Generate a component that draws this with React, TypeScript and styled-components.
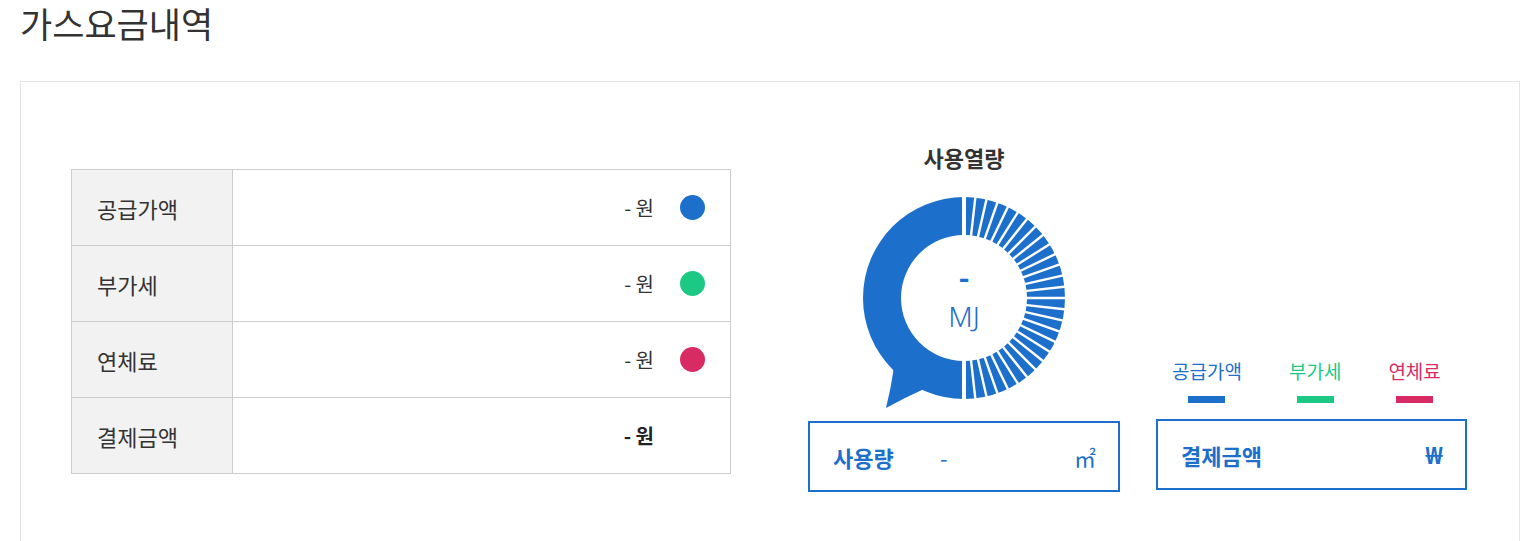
import React from 'react';
import styled, { createGlobalStyle } from 'styled-components';

const BLUE = '#1d6fcc';
const GREEN = '#1bc985';
const PINK = '#d92b63';

const GlobalStyle = createGlobalStyle`
  html, body {
    margin: 0;
    padding: 0;
    background: #fff;
  }
  body {
    font-family: "Noto Sans CJK KR", "Noto Sans", sans-serif;
    color: #333;
    overflow: hidden;
  }
`;

const Page = styled.div`
  padding: 0 9px 0 20px;
`;

const PageTitle = styled.h1`
  margin: 3px 0 38px;
  font-size: 35px;
  line-height: 40px;
  font-weight: 400;
  color: #333;
`;

const Panel = styled.section`
  border: 1px solid #e5e5e5;
  min-height: 520px;
  padding: 0 50px;
  display: flex;
  align-items: flex-start;
`;

const ChargeTable = styled.table`
  margin-top: 87px;
  width: 660px;
  border-collapse: collapse;
  flex-shrink: 0;
`;

const Row = styled.tr`
  height: 76px;
`;

const LabelCell = styled.th`
  width: 161px;
  background: #f2f2f2;
  border: 1px solid #ccc;
  padding: 0 0 0 25px;
  text-align: left;
  font-size: 22px;
  font-weight: 400;
  color: #333;
  box-sizing: border-box;
`;

const ValueCell = styled.td`
  border: 1px solid #ccc;
  padding: 0 25px 0 0;
`;

const ValueInner = styled.div`
  display: flex;
  justify-content: flex-end;
  align-items: center;
  gap: 26px;
`;

const Amount = styled.span<{ $strong?: boolean }>`
  font-size: 20px;
  font-weight: ${(p) => (p.$strong ? 700 : 400)};
  color: ${(p) => (p.$strong ? '#222' : '#333')};
`;

const Dot = styled.span<{ $color?: string }>`
  width: 25px;
  height: 25px;
  border-radius: 50%;
  background: ${(p) => p.$color || 'transparent'};
`;

const GaugeColumn = styled.div`
  margin: 61px 0 0 77px;
  width: 312px;
  display: flex;
  flex-direction: column;
  align-items: center;
  flex-shrink: 0;
`;

const GaugeTitle = styled.h3`
  margin: 0;
  font-size: 22px;
  line-height: 29px;
  font-weight: 700;
  color: #333;
`;

const GaugeWrap = styled.div`
  position: relative;
  margin-top: 21px;
  width: 312px;
  height: 220px;
`;

const GaugeCenter = styled.div`
  position: absolute;
  left: 106px;
  top: 55px;
  width: 100px;
  height: 100px;
  display: flex;
  flex-direction: column;
  align-items: center;
  justify-content: center;
  color: ${BLUE};
`;

const CenterDash = styled.span`
  font-size: 30px;
  line-height: 22px;
  font-weight: 700;
  margin-bottom: 14px;
`;

const CenterUnit = styled.span`
  font-family: "Noto Sans", sans-serif;
  font-size: 28px;
  line-height: 30px;
  font-weight: 300;
`;

const SummaryBox = styled.div<{ $width: number; $gap?: number }>`
  box-sizing: border-box;
  width: ${(p) => p.$width}px;
  height: 71px;
  margin-top: ${(p) => p.$gap || 0}px;
  border: 2px solid ${BLUE};
  display: flex;
  align-items: center;
  padding: 0 22px 0 23px;
  color: ${BLUE};
`;

const BoxLabel = styled.span<{ $width?: number }>`
  font-size: 22px;
  font-weight: 700;
  width: ${(p) => (p.$width ? `${p.$width}px` : 'auto')};
`;

const BoxValue = styled.span`
  flex: 1;
  font-size: 22px;
`;

const BoxUnit = styled.span`
  font-size: 22px;
`;

const WonSign = styled.span`
  font-family: "Noto Sans", "DejaVu Sans", sans-serif;
  font-size: 24px;
  font-weight: 700;
`;

const SummaryColumn = styled.div`
  margin: 276px 0 0 36px;
  width: 311px;
  display: flex;
  flex-direction: column;
  flex-shrink: 0;
`;

const Legend = styled.ul`
  list-style: none;
  margin: 0 0 16px;
  padding: 0 0 0 16px;
  display: flex;
  gap: 47px;
`;

const LegendItem = styled.li<{ $color: string }>`
  display: flex;
  flex-direction: column;
  align-items: center;
  gap: 12px;
  font-size: 19px;
  line-height: 26px;
  color: ${(p) => p.$color};
`;

const LegendBar = styled.span<{ $color: string }>`
  width: 37px;
  height: 7px;
  background: ${(p) => p.$color};
`;

const rows = [
  { label: '공급가액', color: BLUE },
  { label: '부가세', color: GREEN },
  { label: '연체료', color: PINK },
];

const CX = 156;
const CY = 105;
const R_OUT = 101;
const R_IN = 63;
const SEGMENTS = 28;

const pt = (r: number, deg: number) => {
  const a = (deg * Math.PI) / 180;
  return [CX + r * Math.sin(a), CY - r * Math.cos(a)];
};

const halfRing = (from: number, to: number) => {
  const [x1, y1] = pt(R_OUT, from);
  const [x2, y2] = pt(R_OUT, to);
  const [x3, y3] = pt(R_IN, to);
  const [x4, y4] = pt(R_IN, from);
  return `M ${x1} ${y1} A ${R_OUT} ${R_OUT} 0 0 1 ${x2} ${y2} L ${x3} ${y3} A ${R_IN} ${R_IN} 0 0 0 ${x4} ${y4} Z`;
};

const Gauge = () => {
  const step = 180 / SEGMENTS;
  const gaps = Array.from({ length: SEGMENTS + 1 }, (_, i) => i * step);
  return (
    <svg width="312" height="220" viewBox="0 0 312 220">
      <path d={`${halfRing(0, 180)} ${halfRing(180, 360)}`} fill={BLUE} />
      <path d="M 86 174 Q 83 195 78 215 Q 96 205 116 196 L 120 185 Z" fill={BLUE} />
      {gaps.map((deg, i) => {
        const [x1, y1] = pt(R_IN - 2, deg);
        const [x2, y2] = pt(R_OUT + 2, deg);
        const edge = i === 0 || i === SEGMENTS;
        return (
          <line
            key={i}
            x1={x1}
            y1={y1}
            x2={x2}
            y2={y2}
            stroke="#fff"
            strokeWidth={edge ? 4 : 2.4}
          />
        );
      })}
    </svg>
  );
};

export default function App() {
  return (
    <Page>
      <GlobalStyle />
      <PageTitle>가스요금내역</PageTitle>
      <Panel>
        <ChargeTable>
          <tbody>
            {rows.map((r) => (
              <Row key={r.label}>
                <LabelCell>{r.label}</LabelCell>
                <ValueCell>
                  <ValueInner>
                    <Amount>- 원</Amount>
                    <Dot $color={r.color} />
                  </ValueInner>
                </ValueCell>
              </Row>
            ))}
            <Row>
              <LabelCell>결제금액</LabelCell>
              <ValueCell>
                <ValueInner>
                  <Amount $strong>- 원</Amount>
                  <Dot />
                </ValueInner>
              </ValueCell>
            </Row>
          </tbody>
        </ChargeTable>

        <GaugeColumn>
          <GaugeTitle>사용열량</GaugeTitle>
          <GaugeWrap>
            <Gauge />
            <GaugeCenter>
              <CenterDash>-</CenterDash>
              <CenterUnit>MJ</CenterUnit>
            </GaugeCenter>
          </GaugeWrap>
          <SummaryBox $width={312} $gap={8}>
            <BoxLabel $width={107}>사용량</BoxLabel>
            <BoxValue>-</BoxValue>
            <BoxUnit>㎡</BoxUnit>
          </SummaryBox>
        </GaugeColumn>

        <SummaryColumn>
          <Legend>
            <LegendItem $color={BLUE}>
              공급가액
              <LegendBar $color={BLUE} />
            </LegendItem>
            <LegendItem $color={GREEN}>
              부가세
              <LegendBar $color={GREEN} />
            </LegendItem>
            <LegendItem $color={PINK}>
              연체료
              <LegendBar $color={PINK} />
            </LegendItem>
          </Legend>
          <SummaryBox $width={311}>
            <BoxLabel>결제금액</BoxLabel>
            <BoxValue />
            <WonSign>₩</WonSign>
          </SummaryBox>
        </SummaryColumn>
      </Panel>
    </Page>
  );
}
